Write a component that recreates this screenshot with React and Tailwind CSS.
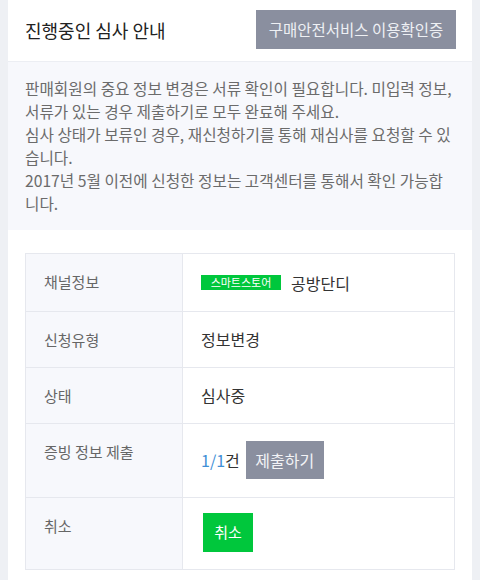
import React from "react";

const rows = [
  { label: "채널정보", type: "channel", pad: "py-[16px]" },
  { label: "신청유형", value: "정보변경", pad: "py-[16px]" },
  { label: "상태", value: "심사중", pad: "py-[16px]" },
  { label: "증빙 정보 제출", type: "proof", pad: "pt-[17px] pb-[18px]" },
  { label: "취소", type: "cancel", pad: "pt-[15px] pb-[17px]" },
];

const notice = [
  "판매회원의 중요 정보 변경은 서류 확인이 필요합니다. 미입력 정보,",
  "서류가 있는 경우 제출하기로 모두 완료해 주세요.",
  "심사 상태가 보류인 경우, 재신청하기를 통해 재심사를 요청할 수 있",
  "습니다.",
  "2017년 5월 이전에 신청한 정보는 고객센터를 통해서 확인 가능합",
  "니다.",
];

function Value({ row }) {
  if (row.type === "channel") {
    return (
      <div className="flex items-center gap-[10px] h-[25px]">
        <span className="bg-[#00c73c] text-white text-[11px] leading-[15px] h-[15px] w-[80px] text-center">스마트스토어</span>
        <span className="text-[16px] text-[#333]">공방단디</span>
      </div>
    );
  }
  if (row.type === "proof") {
    return (
      <div className="flex items-center gap-[6px]">
        <span className="text-[16px] text-[#333]">
          <span className="text-[#3f8fd6]">1/1</span>건
        </span>
        <button className="bg-[#8a8f9f] text-[#f2f3f6] text-[16px] h-[38px] w-[78px]">제출하기</button>
      </div>
    );
  }
  if (row.type === "cancel") {
    return (
      <div className="pl-[2px] flex">
        <button className="bg-[#00c73c] text-white text-[15px] h-[39px] w-[50px]">취소</button>
      </div>
    );
  }
  return <div className="text-[16px] text-[#333] leading-[23px]">{row.value}</div>;
}

export default function App() {
  return (
    <div
      className="min-h-[580px] bg-[#eef0f4] px-[8px]"
      style={{ fontFamily: '"Noto Sans CJK KR", "Noto Sans", sans-serif' }}
    >
      <div className="bg-white min-h-[580px]">
        {/* 헤더 */}
        <div className="flex items-center justify-between h-[62px] pl-[17px] pr-[16px] border-b border-[#eceef3]">
          <h2 className="text-[18px] text-[#222]">진행중인 심사 안내</h2>
          <button className="bg-[#8a8f9f] text-[#eef0f4] text-[15.5px] h-[39px] w-[200px] -mt-[2px]">
            구매안전서비스 이용확인증
          </button>
        </div>

        {/* 안내 문구 */}
        <div className="bg-[#f7f8fc] px-[17px] pt-[15px] pb-[15px] text-[15.7px] leading-[23px] text-[#6b6b6b] whitespace-nowrap">
          {notice.map((line, i) => (
            <div key={i}>{line}</div>
          ))}
        </div>

        {/* 심사 정보 */}
        <div className="px-[17px] pt-[23px] pb-[12px]">
          <div className="border border-[#e6e8ee]">
            {rows.map((row, i) => (
              <div key={i} className={`flex ${i > 0 ? "border-t border-[#e6e8ee]" : ""}`}>
                <div className="w-[157px] shrink-0 bg-[#f7f8fc] border-r border-[#e6e8ee] px-[18px] py-[16px] text-[15px] leading-[23px] text-[#666]">
                  {row.label}
                </div>
                <div className={`flex-1 px-[18px] ${row.pad}`}>
                  <Value row={row} />
                </div>
              </div>
            ))}
          </div>
        </div>
      </div>
    </div>
  );
}
